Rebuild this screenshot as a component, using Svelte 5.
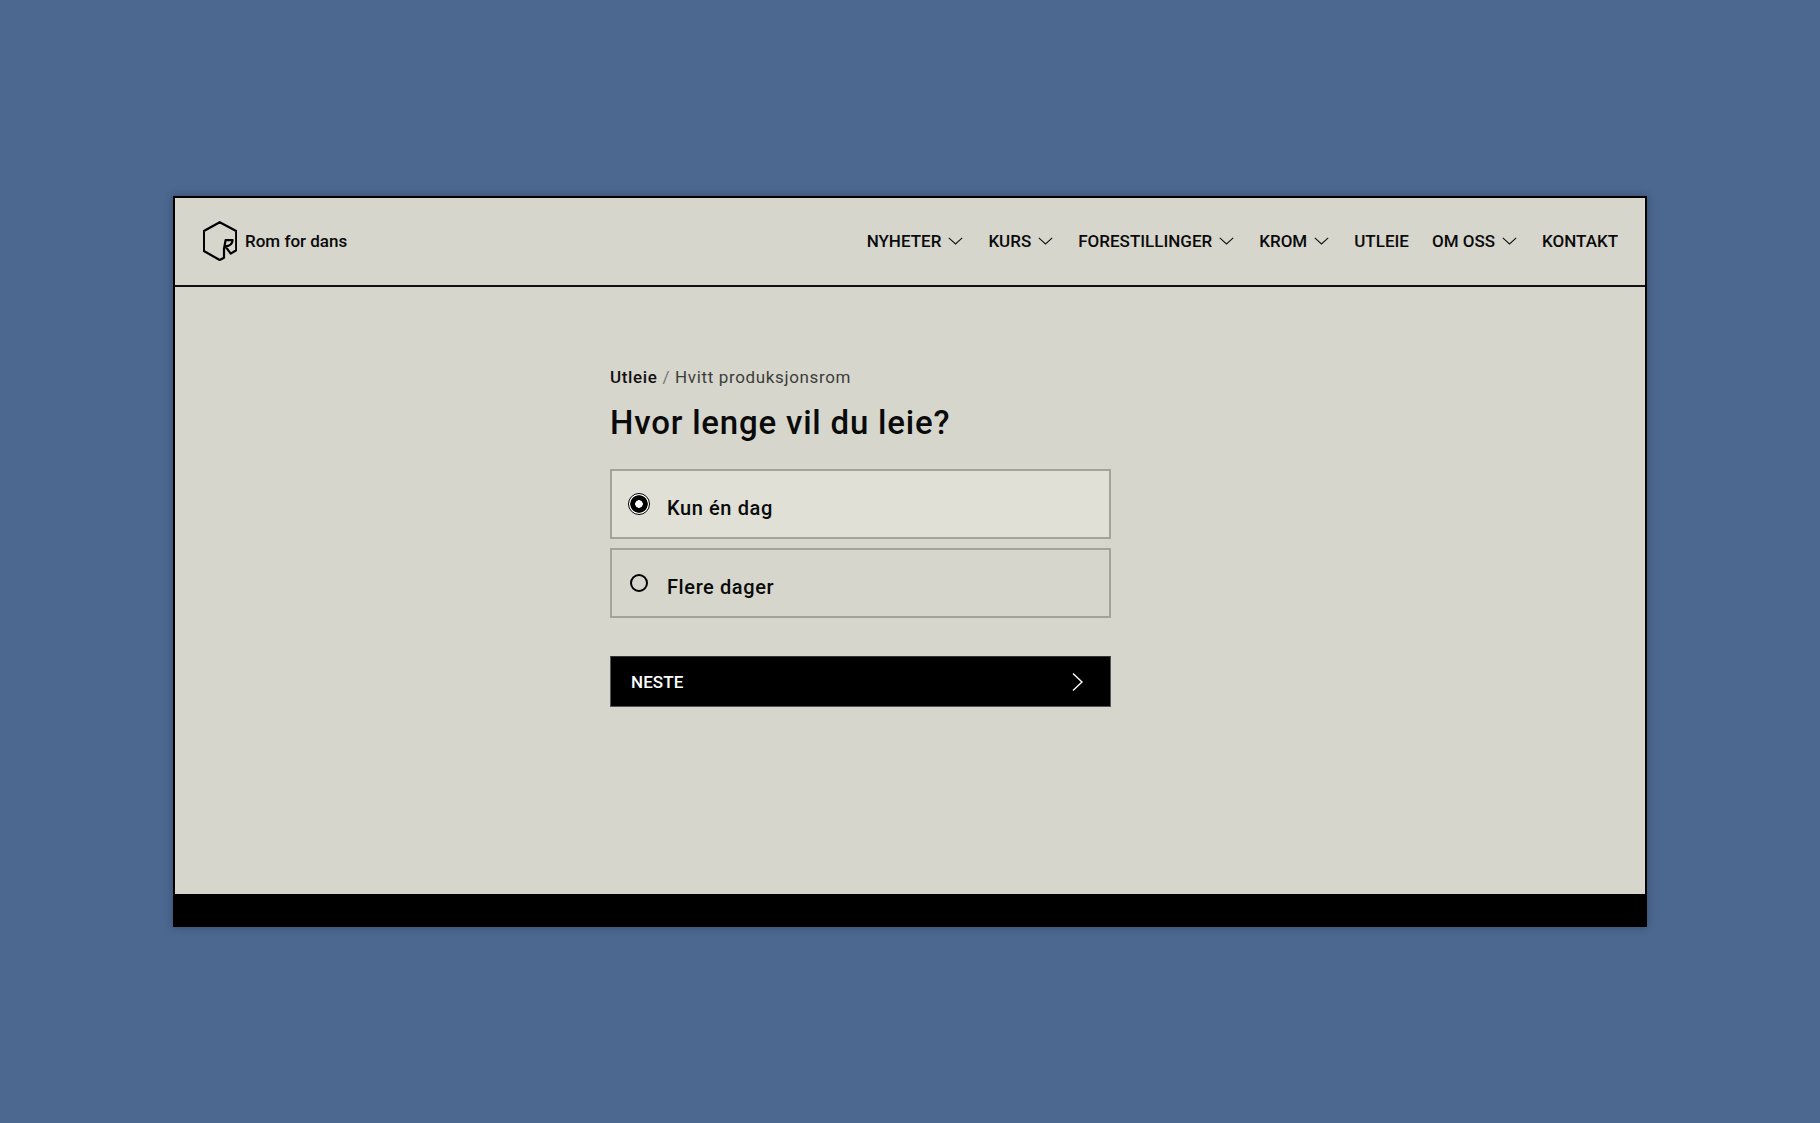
<script>
  const nav = [
    { label: 'NYHETER', caret: true },
    { label: 'KURS', caret: true },
    { label: 'FORESTILLINGER', caret: true },
    { label: 'KROM', caret: true },
    { label: 'UTLEIE', caret: false },
    { label: 'OM OSS', caret: true },
    { label: 'KONTAKT', caret: false }
  ];
</script>

<div class="stage">
  <div class="window">
    <header class="header">
      <a class="brand" href="#top">
        <svg class="logo" width="34" height="40" viewBox="0 0 34 40" fill="none" stroke="#000" stroke-width="2.2" stroke-linejoin="round">
          <path d="M16.7 1.2 33.2 10V29.3L27.7 32.6 22.4 25.4C26.5 25 29.4 23 29.6 19.2H22.6L21 27.7V36.7L16.7 39 .9 30V10Z" />
        </svg>
        <span>Rom for dans</span>
      </a>
      <nav class="nav">
        {#each nav as item}
          <a class="nav-item" href="#top">
            <span>{item.label}</span>
            {#if item.caret}
              <svg width="15" height="8" viewBox="0 0 15 8" fill="none" stroke="#111" stroke-width="1.1"><path d="M.8.8 7.5 7 14.2.8" /></svg>
            {/if}
          </a>
        {/each}
      </nav>
    </header>

    <main class="main">
      <div class="form">
        <p class="crumb"><b>Utleie</b> <i>/</i> Hvitt produksjonsrom</p>
        <h1>Hvor lenge vil du leie?</h1>
        <label class="option selected">
          <span class="radio on"></span>
          <span class="opt-label">Kun én dag</span>
        </label>
        <label class="option">
          <span class="radio"></span>
          <span class="opt-label">Flere dager</span>
        </label>
        <button class="next">
          <span>NESTE</span>
          <svg width="12" height="20" viewBox="0 0 12 20" fill="none" stroke="#fff" stroke-width="1.4"><path d="M1 1.5 10 10 1 18.5" /></svg>
        </button>
      </div>
    </main>

    <footer class="footer"></footer>
  </div>
</div>

<style>
  :global(body) {
    margin: 0;
    background: #4c6890;
  }
  .stage {
    box-sizing: border-box;
    height: 1123px;
    padding: 196px 173px 0;
    font-family: Roboto, "Noto Sans", sans-serif;
    color: #0a0a0a;
  }
  .window {
    box-sizing: border-box;
    width: 1474px;
    height: 731px;
    display: flex;
    flex-direction: column;
    border: 2px solid #000;
    background: #d6d6cd;
    box-shadow: 0 0 8px rgba(20, 30, 50, 0.4);
  }
  .header {
    flex: none;
    box-sizing: border-box;
    height: 89px;
    display: flex;
    align-items: center;
    justify-content: space-between;
    padding: 0 27px 2px 28px;
    border-bottom: 2px solid #111;
  }
  a {
    color: inherit;
    text-decoration: none;
  }
  .brand {
    display: flex;
    align-items: center;
    gap: 8px;
    font-size: 17px;
    font-weight: 500;
  }
  .nav {
    display: flex;
    align-items: center;
    gap: 23px;
  }
  .nav-item {
    display: flex;
    align-items: center;
    gap: 7px;
    font-size: 17px;
    font-weight: 500;
  }
  .nav-item svg {
    margin-right: 2px;
  }
  .main {
    flex: 1;
    padding: 78px 0 0 435px;
  }
  .form {
    width: 501px;
  }
  .crumb {
    margin: 0;
    font-size: 17px;
    line-height: 24px;
    letter-spacing: 0.65px;
    color: #3d3d3a;
  }
  .crumb b {
    font-weight: 500;
    color: #111;
  }
  .crumb i {
    font-style: normal;
    color: #777;
  }
  h1 {
    margin: 12px 0 24px;
    font-size: 33px;
    line-height: 44px;
    font-weight: 500;
    letter-spacing: 0.8px;
  }
  .option {
    box-sizing: border-box;
    height: 70px;
    display: flex;
    align-items: center;
    gap: 19px;
    padding-left: 18px;
    margin-bottom: 9px;
    border: 2px solid #a3a39a;
  }
  .option.selected {
    background: #e0e0d7;
  }
  .opt-label {
    font-size: 20px;
    font-weight: 500;
    letter-spacing: 0.6px;
    padding-top: 8px;
  }
  .radio {
    box-sizing: border-box;
    width: 18px;
    height: 18px;
    border: 2px solid #000;
    border-radius: 50%;
    flex: none;
  }
  .radio.on {
    width: 22px;
    height: 22px;
    margin: 0 -2px;
    border: 1px solid #000;
    background: radial-gradient(circle, #fff 0 3.5px, #000 4px 8.4px, #fff 9px);
  }
  .next {
    box-sizing: border-box;
    width: 501px;
    height: 51px;
    margin-top: 38px;
    display: flex;
    align-items: center;
    justify-content: space-between;
    padding: 0 26px 0 20px;
    background: #000;
    border: 1px solid #555;
    border-top-color: #333;
    color: #fff;
    font-family: inherit;
    font-size: 17px;
    font-weight: 500;
    letter-spacing: 0.1px;
  }
  .footer {
    flex: none;
    height: 31px;
    background: #000;
  }
</style>
